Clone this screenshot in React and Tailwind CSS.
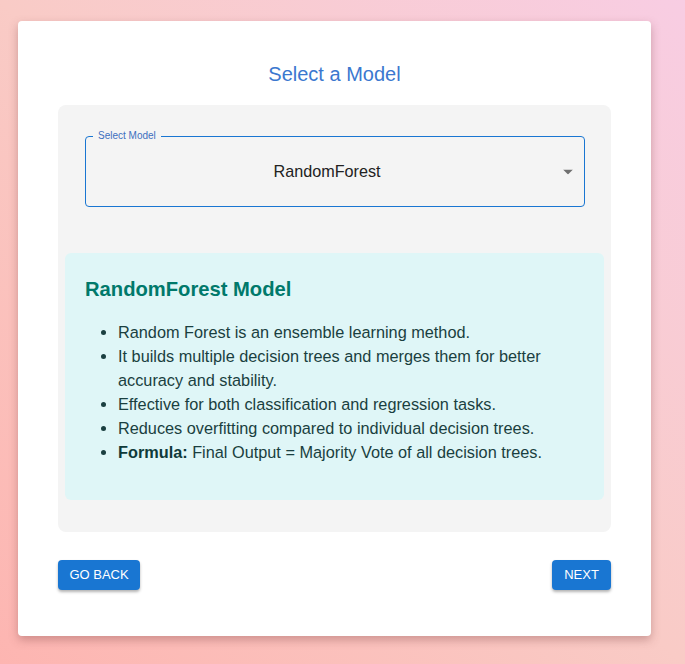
import React from "react";

const points = [
  "Random Forest is an ensemble learning method.",
  "It builds multiple decision trees and merges them for better accuracy and stability.",
  "Effective for both classification and regression tasks.",
  "Reduces overfitting compared to individual decision trees.",
];

export default function App() {
  return (
    <div
      className="min-h-screen w-full bg-gradient-to-tr from-[#fdb5b1] via-[#f9cbc6] to-[#f8cde3] pl-[18px] pt-[21px] pb-[28px]"
      style={{ fontFamily: '"Liberation Sans", Arial, sans-serif' }}
    >
      <div className="w-[633px] h-[615px] bg-white rounded-[4px] shadow-[0_4px_10px_rgba(120,60,60,0.35)] px-10 pt-[39px]">
        <h2 className="text-center text-[20px] leading-[28px] text-[#3b78cf]">Select a Model</h2>

        <div className="mt-[17px] h-[427px] bg-[#f4f4f4] rounded-[8px] pt-[31px]">
          {/* select field */}
          <div className="relative ml-[27px] mr-[26px] h-[71px] rounded-[4px] border border-[#1976d2] flex items-center justify-center">
            <span className="absolute -top-[7px] left-[7px] px-[5px] bg-[#f4f4f4] text-[10px] leading-[12px] text-[#3d6fbf]">
              Select Model
            </span>
            <span className="text-[16.2px] text-[#222] -ml-4">RandomForest</span>
            <svg className="absolute right-[11px] top-1/2 -translate-y-1/2" width="10" height="5" viewBox="0 0 10 5">
              <path d="M0 0 L10 0 L5 5 Z" fill="#707070" />
            </svg>
          </div>

          {/* model info */}
          <div className="mx-[7px] mt-[46px] h-[247px] rounded-[6px] bg-[#dff6f7] px-5 pt-[22px]">
            <h3 className="text-[20.2px] leading-[28px] font-bold text-[#00796b]">RandomForest Model</h3>
            <ul className="mt-[17px] list-disc pl-[33px] pr-[40px] text-[16.3px] leading-[24px] text-[#1a3f40]">
              {points.map((p) => (
                <li key={p}>{p}</li>
              ))}
              <li>
                <span className="font-bold text-[#0f3a3a]">Formula:</span> Final Output = Majority Vote of all decision trees.
              </li>
            </ul>
          </div>
        </div>

        <div className="mt-7 flex justify-between">
          <button className="h-[30px] w-[82px] rounded-[4px] bg-[#1976d2] text-white text-[13px] font-medium uppercase shadow-[0_2px_3px_rgba(0,0,0,0.3)]">
            Go Back
          </button>
          <button className="h-[30px] w-[59px] rounded-[4px] bg-[#1976d2] text-white text-[13px] font-medium uppercase shadow-[0_2px_3px_rgba(0,0,0,0.3)]">
            Next
          </button>
        </div>
      </div>
    </div>
  );
}
